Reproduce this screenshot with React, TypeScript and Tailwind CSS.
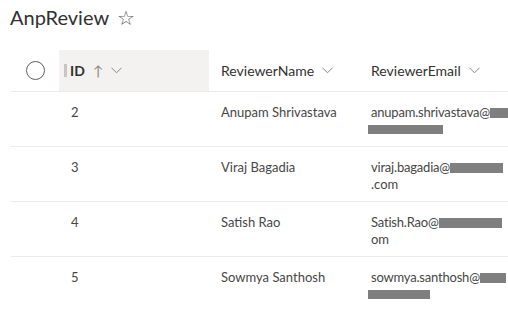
import React from "react";

const rows = [
  { id: "2", name: "Anupam Shrivastava", l1: "anupam.shrivastava@", b1: 22, l2: "", b2: 75 },
  { id: "3", name: "Viraj Bagadia", l1: "viraj.bagadia@", b1: 53, l2: ".com", b2: 0 },
  { id: "4", name: "Satish Rao", l1: "Satish.Rao@", b1: 63, l2: "om", b2: 0 },
  { id: "5", name: "Sowmya Santhosh", l1: "sowmya.santhosh@", b1: 26, l2: "", b2: 62 },
];

function Chevron() {
  return (
    <svg width="11" height="7" viewBox="0 0 11 7" className="ml-2 inline-block">
      <path d="M0.5 0.8 L5.5 5.8 L10.5 0.8" fill="none" stroke="#8a8886" strokeWidth="1" />
    </svg>
  );
}

export default function App() {
  return (
    <div className="w-[508px] h-[309px] overflow-hidden bg-white text-[#323130]" style={{ fontFamily: 'Lato, "Open Sans", sans-serif' }}>
      <div className="flex items-center h-[32px] pl-[10px] pt-[2px]">
        <span className="text-[20px] text-[#323130]">AnpReview</span>
        <span className="ml-[8px] text-[20px] leading-none text-[#605e5c]">☆</span>
      </div>
      <div className="ml-[11px] mt-[18px]">
        <div className="flex h-[42px] border-b border-[#edebe9]">
          <div className="w-[48px] shrink-0 flex items-center justify-center">
            <div className="w-[19px] h-[19px] rounded-full border border-[#605e5c]" />
          </div>
          <div className="w-[150px] shrink-0 bg-[#f3f2f1] flex items-center pl-[5px] text-[14px] text-[#323130]">
            <span className="w-[3px] h-[13px] bg-[#c8c6c4] mr-[3px]" />
            <span className="font-bold">ID</span>
            <span className="ml-[8px] text-[#8a8886] text-[14px]">↑</span>
            <Chevron />
          </div>
          <div className="w-[150px] shrink-0 flex items-center pl-[12px] text-[14px]">
            ReviewerName
            <Chevron />
          </div>
          <div className="flex-1 min-w-0 flex items-center pl-[12px] text-[14px]">
            ReviewerEmail
            <Chevron />
          </div>
        </div>
        {rows.map((r) => (
          <div key={r.id} className="flex h-[55px] border-b border-[#edebe9] text-[13px] text-[#484644] leading-[17px]">
            <div className="w-[48px] shrink-0" />
            <div className="w-[150px] shrink-0 pl-[12px] pt-[12px]">{r.id}</div>
            <div className="w-[150px] shrink-0 pl-[12px] pt-[12px]">{r.name}</div>
            <div className="flex-1 min-w-0 overflow-hidden pl-[12px] pt-[12px]">
              <div className="flex items-center whitespace-nowrap tracking-[-0.2px]">
                {r.l1}
                <span className="inline-block shrink-0 h-[10px] bg-[#7f7f7f]" style={{ width: r.b1 }} />
              </div>
              <div className="flex items-center h-[17px]">
                {r.l2}
                {r.b2 > 0 && <span className="inline-block h-[9px] bg-[#7f7f7f] -ml-[3px]" style={{ width: r.b2 }} />}
              </div>
            </div>
          </div>
        ))}
      </div>
    </div>
  );
}
